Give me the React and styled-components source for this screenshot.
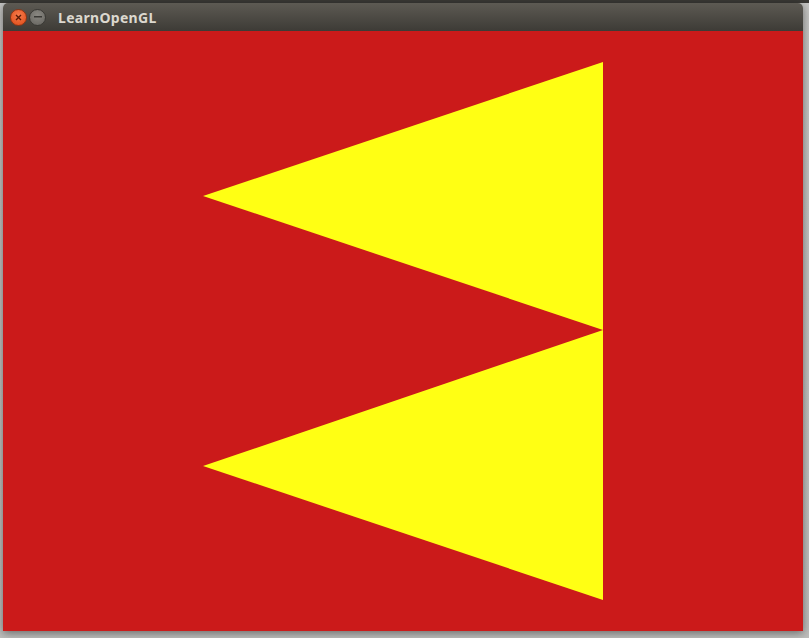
import React from "react";
import styled, { createGlobalStyle } from "styled-components";

const Global = createGlobalStyle`
  html, body { margin: 0; padding: 0; }
  body { font-family: "Noto Sans", "DejaVu Sans", sans-serif; overflow: hidden; }
`;

const Desktop = styled.div`
  width: 809px;
  height: 638px;
  padding: 3px 6px 7px 3px;
  box-sizing: border-box;
  background: linear-gradient(to bottom, #3a3935 0, #3a3935 3px, #c4c4c2 3px, #bdbdbb 100%);
`;

const Window = styled.div`
  width: 800px;
  display: flex;
  flex-direction: column;
  border-radius: 5px 5px 0 0;
  overflow: hidden;
  box-shadow: 0 2px 8px rgba(0, 0, 0, 0.45);
`;

const TitleBar = styled.div`
  height: 28px;
  display: flex;
  align-items: center;
  gap: 2px;
  padding: 0 0 0 7px;
  background: linear-gradient(to bottom, #5d5a53, #3d3b36);
`;

const WinButton = styled.div`
  width: 17px;
  height: 17px;
  border-radius: 50%;
  display: flex;
  align-items: center;
  justify-content: center;
  box-sizing: border-box;
  border: 1px solid ${({ close }) => (close ? "#8c3515" : "#3a3935")};
  background: ${({ close }) =>
    close
      ? "radial-gradient(circle at 50% 35%, #f47a4b, #df4b17)"
      : "radial-gradient(circle at 50% 35%, #8a8882, #65635e)"};
`;

const Title = styled.span`
  margin-left: 10px;
  color: #dcd8cf;
  font-size: 14px;
  font-weight: 700;
  letter-spacing: 0.3px;
`;

const Canvas = styled.div`
  height: 600px;
  background: #cb1a1a;
  svg { display: block; }
`;

export default function App() {
  return (
    <>
      <Global />
      <Desktop>
        <Window>
          <TitleBar>
            <WinButton close>
              <svg width="7" height="7" viewBox="0 0 7 7">
                <path d="M1 1L6 6M6 1L1 6" stroke="#5a1a05" strokeWidth="1.4" />
              </svg>
            </WinButton>
            <WinButton>
              <svg width="8" height="2" viewBox="0 0 8 2">
                <rect width="8" height="1.5" fill="#3a3935" />
              </svg>
            </WinButton>
            <Title>LearnOpenGL</Title>
          </TitleBar>
          <Canvas>
            <svg width="800" height="600" viewBox="0 0 800 600">
              <polygon points="200,165 600,31 600,299" fill="#ffff14" />
              <polygon points="200,435 600,299 600,569" fill="#ffff14" />
            </svg>
          </Canvas>
        </Window>
      </Desktop>
    </>
  );
}
